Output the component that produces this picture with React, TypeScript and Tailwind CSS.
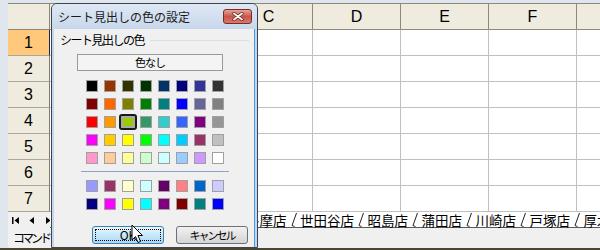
import React from "react";

const jp = "font-['Noto_Sans_CJK_JP',sans-serif]";

const cols = [
  { label: "", w: "w-[87px]" },
  { label: "", w: "w-[88px]" },
  { label: "C", w: "w-[88px]" },
  { label: "D", w: "w-[88px]" },
  { label: "E", w: "w-[88px]" },
  { label: "F", w: "w-[88px]" },
  { label: "", w: "w-[88px]" },
];

const palette = [
  ["bg-[#000000]", "bg-[#993300]", "bg-[#333300]", "bg-[#003300]", "bg-[#003366]", "bg-[#000080]", "bg-[#333399]", "bg-[#333333]"],
  ["bg-[#800000]", "bg-[#ff6600]", "bg-[#808000]", "bg-[#008000]", "bg-[#008080]", "bg-[#0000ff]", "bg-[#666699]", "bg-[#808080]"],
  ["bg-[#ff0000]", "bg-[#ff9900]", "bg-[#99cc00]", "bg-[#339966]", "bg-[#33cccc]", "bg-[#3366ff]", "bg-[#800080]", "bg-[#969696]"],
  ["bg-[#ff00ff]", "bg-[#ffcc00]", "bg-[#ffff00]", "bg-[#00ff00]", "bg-[#00ffff]", "bg-[#00ccff]", "bg-[#993366]", "bg-[#c0c0c0]"],
  ["bg-[#ff99cc]", "bg-[#ffcc99]", "bg-[#ffff99]", "bg-[#ccffcc]", "bg-[#ccffff]", "bg-[#99ccff]", "bg-[#cc99ff]", "bg-[#ffffff]"],
];

const extra = [
  ["bg-[#9999ff]", "bg-[#993366]", "bg-[#ffffcc]", "bg-[#ccffff]", "bg-[#660066]", "bg-[#ff8080]", "bg-[#0066cc]", "bg-[#ccccff]"],
  ["bg-[#000080]", "bg-[#ff00ff]", "bg-[#ffff00]", "bg-[#00ffff]", "bg-[#800080]", "bg-[#800000]", "bg-[#008080]", "bg-[#0000ff]"],
];

const tabs = ["多摩店", "世田谷店", "昭島店", "蒲田店", "川崎店", "戸塚店", "厚木店"];

function Swatch({ color, selected }: { color: string; selected?: boolean }) {
  return (
    <div className={`relative size-[12px] border border-[#a0a0a0] ${color}`}>
      {selected && (
        <span className="absolute -left-[4px] -right-[4px] -top-[3px] -bottom-[3px] rounded-[3px] border-2 border-[#1a1a1a] shadow-[inset_0_0_0_2px_#a8a8a8]" />
      )}
    </div>
  );
}

function SwatchGrid({ rows, sel }: { rows: string[][]; sel?: [number, number] }) {
  return (
    <div className="grid grid-cols-[repeat(8,12px)] gap-[6px]">
      {rows.map((r, i) =>
        r.map((c, j) => (
          <Swatch key={`${i}-${j}`} color={c} selected={sel && sel[0] === i && sel[1] === j} />
        ))
      )}
    </div>
  );
}

function TabSep() {
  return (
    <svg width="6" height="15" viewBox="0 0 6 15" className="shrink-0">
      <path d="M5.5 1 L1 13.5 L3.5 14.5" fill="none" stroke="#222" strokeWidth="1" />
    </svg>
  );
}

export default function App() {
  return (
    <div className="relative w-[600px] h-[250px] overflow-hidden bg-[#dfe6ee] flex flex-col font-['Liberation_Sans',sans-serif] text-black">
      <div className="h-[3px] shrink-0" />

      {/* column headers */}
      <div className="flex h-[27px] shrink-0 ml-[8px] bg-[#efebde] border-y border-[#8c8978]">
        <div className="w-[42px] shrink-0 border-r border-[#8c8978]" />
        {cols.map((c, i) => (
          <div key={i} className={`${c.w} shrink-0 border-r border-[#8c8978] flex items-center justify-center text-[16px]`}>
            {c.label}
          </div>
        ))}
      </div>

      {/* rows */}
      {[1, 2, 3, 4, 5, 6, 7].map((n) => (
        <div key={n} className="flex h-[26px] shrink-0 ml-[8px] bg-white">
          <div
            className={`w-[42px] shrink-0 border-b border-r flex items-center justify-center text-[16px] ${
              n === 1 ? "bg-[#ffc87a] border-b-[#aca899] border-r-[#1b2456]" : "bg-[#efebde] border-b-[#aca899] border-r-[#7f7b6b]"
            }`}
          >
            {n}
          </div>
          {cols.map((c, i) => (
            <div key={i} className={`${c.w} shrink-0 border-r border-b border-[#c0c0c0]`} />
          ))}
        </div>
      ))}

      {/* sheet tabs */}
      <div className="flex h-[16px] shrink-0 ml-[8px]">
        <div className="w-[42px] shrink-0 bg-[#f0f0f0] flex items-center">
          <svg width="42" height="16" viewBox="0 0 42 16">
            <rect x="4" y="5" width="1.5" height="7" fill="#000" />
            <path d="M11 5 L6.5 8.5 L11 12 Z" fill="#000" />
            <path d="M26 5 L21.5 8.5 L26 12 Z" fill="#000" />
            <path d="M38 5 L42.5 8.5 L38 12 Z" fill="#000" />
          </svg>
        </div>
        <div className={`flex-1 bg-white border-b border-[#5a5a5a] flex items-center pl-[196px] ${jp} text-[13.5px] leading-[16px]`}>
          {tabs.map((t) => (
            <div key={t} className="flex items-center shrink-0">
              <span className="pr-[4px] whitespace-nowrap">{t}</span>
              <TabSep />
              <span className="w-[3.5px]" />
            </div>
          ))}
        </div>
      </div>

      {/* status bar */}
      <div className="flex items-center h-[20px] shrink-0 ml-[8px] bg-[#f0f0f0] pl-[5px]">
        <span className={`${jp} text-[12px] tracking-[-3px] leading-none`}>コマンド</span>
      </div>
      <div className="h-[2px] shrink-0 bg-[#4a4632]" />

      {/* dialog */}
      <div className="absolute left-[51px] top-[3px] w-[207px] h-[245px] rounded-t-[6px] border border-[#3a4452] bg-[#c6d6ea] flex flex-col overflow-hidden">
        <div className="h-[25px] shrink-0 flex items-center pl-[6px] bg-linear-to-b from-[#dfe8f4] to-[#c7d7eb]">
          <span className={`${jp} text-[12px] text-[#1a1a1a] leading-none`}>シート見出しの色の設定</span>
          <div className="ml-auto mr-[5px] w-[29px] h-[15px] rounded-[3px] border border-[#7a2b25] bg-linear-to-b from-[#e4a598] via-[#c9544c] to-[#d7786c] flex items-center justify-center">
            <svg width="12" height="9" viewBox="0 0 12 9">
              <path d="M2 1.5 L10 7.5 M10 1.5 L2 7.5" stroke="#5a1f1a" strokeWidth="3.2" strokeLinecap="round" />
              <path d="M2 1.5 L10 7.5 M10 1.5 L2 7.5" stroke="#fff" strokeWidth="1.8" strokeLinecap="round" />
            </svg>
          </div>
        </div>

        <div className="flex-1 mx-[2px] bg-[#f0f0f0] border-r border-[#3c9ee6] flex flex-col">
          <div className="flex items-center h-[14px] mt-[4px] pl-[6px]">
            <span className={`${jp} text-[12px] tracking-[-1.5px] leading-none`}>シート見出しの色</span>
            <div className="flex-1 h-px bg-[#d5dfe5] ml-[6px] mr-[5px]" />
          </div>

          <div className={`ml-[23px] mt-[7px] w-[146px] h-[17px] border border-[#9a9a9a] bg-[#f4f4f4] flex items-center justify-center ${jp} text-[11px] tracking-[-1px] leading-none`}>
            色なし
          </div>

          <div className="ml-[32px] mt-[9px]">
            <SwatchGrid rows={palette} sel={[2, 2]} />
          </div>

          <div className="ml-[27px] mt-[7px] w-[148px] h-px bg-[#8aa6cf]" />

          <div className="ml-[32px] mt-[8px]">
            <SwatchGrid rows={extra} />
          </div>

          <div className="flex mt-[16px] ml-[38px] gap-[12px]">
            <div className="w-[72px] h-[18px] rounded-[3px] border border-[#3c7fb1] bg-linear-to-b from-[#eaf6fd] to-[#a7d9f5] p-[2px]">
              <div className={`h-full border border-dotted border-black flex items-center justify-center ${jp} text-[12px] leading-none`}>
                OK
              </div>
            </div>
            <div className={`w-[72px] h-[18px] rounded-[3px] border border-[#707070] bg-linear-to-b from-[#f2f2f2] to-[#d4d4d4] flex items-center justify-center ${jp} text-[11px] tracking-[-2px] leading-none`}>
              キャンセル
            </div>
          </div>
        </div>
      </div>

      {/* mouse pointer */}
      <svg className="absolute left-[131px] top-[224px]" width="13" height="20" viewBox="0 0 13 20">
        <path d="M1 1 L1 16 L4.5 12.5 L7 18.5 L9.5 17.5 L7 11.5 L11.5 11.5 Z" fill="#fff" stroke="#000" strokeWidth="1" strokeLinejoin="round" />
      </svg>
    </div>
  );
}
